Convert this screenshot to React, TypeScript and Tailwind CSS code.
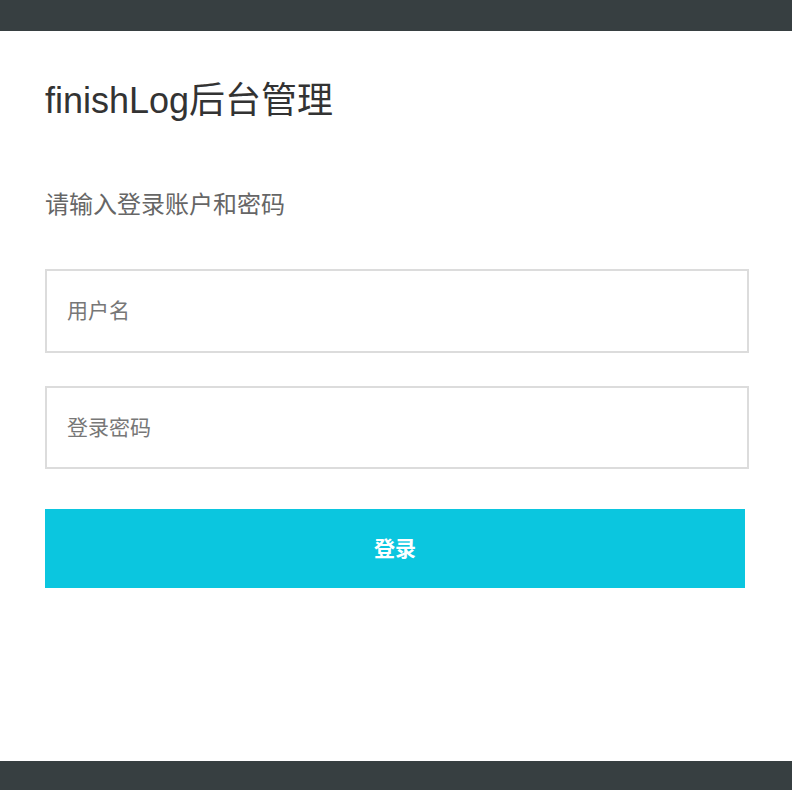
import React from 'react';

export default function App() {
  const font = { fontFamily: '"Liberation Sans", "Noto Sans CJK SC", sans-serif' };

  return (
    <div className="w-[792px] h-[790px] flex flex-col bg-white" style={font}>
      <div className="h-[31px] bg-[#373f41]" />

      <div className="flex-1 px-[45px]">
        <h1 className="mt-[50px] text-[36px] leading-[40px] text-[#333]">finishLog后台管理</h1>

        <p className="mt-[69px] text-[24px] leading-[30px] text-[#666]">请输入登录账户和密码</p>

        <form className="mt-[49px] flex flex-col">
          <input
            type="text"
            placeholder="用户名"
            className="w-[704px] h-[84px] border-2 border-[#dcdcdc] px-[20px] text-[21px] text-[#333] placeholder:text-[#777] outline-none"
          />
          <input
            type="password"
            placeholder="登录密码"
            className="mt-[33px] w-[704px] h-[83px] border-2 border-[#dcdcdc] px-[20px] text-[21px] text-[#333] placeholder:text-[#777] outline-none"
          />
          <button
            type="button"
            className="mt-[40px] w-[700px] h-[79px] bg-[#0bc6df] text-white text-[21px] font-bold"
          >
            登录
          </button>
        </form>
      </div>

      <div className="h-[29px] bg-[#373f41]" />
    </div>
  );
}
